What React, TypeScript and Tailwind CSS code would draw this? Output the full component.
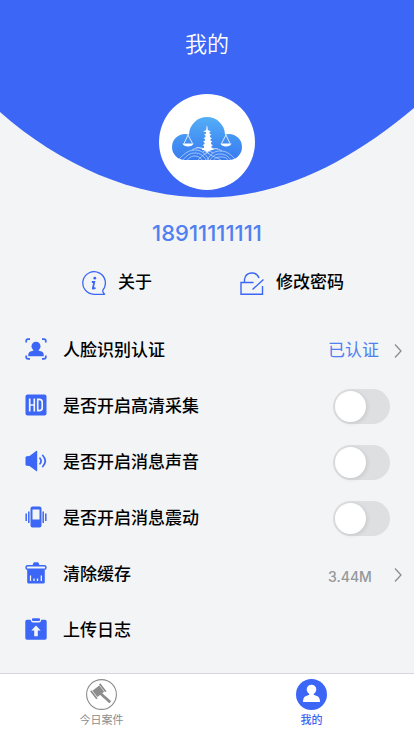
import { useState } from 'react';
import type { ReactNode } from 'react';

const BLUE = '#3c66f5';

function Logo() {
  return (
    <svg viewBox="0 0 96 96" className="size-24" aria-hidden="true">
      <defs>
        <linearGradient id="sky" x1="0" y1="23" x2="0" y2="66" gradientUnits="userSpaceOnUse">
          <stop offset="0" stopColor="#55aef6" />
          <stop offset="0.55" stopColor="#4391f3" />
          <stop offset="1" stopColor="#3a7bf0" />
        </linearGradient>
        <clipPath id="cloud">
          <circle cx="48" cy="41" r="18" />
          <circle cx="26" cy="53" r="13" />
          <circle cx="70" cy="53" r="13" />
          <rect x="26" y="46" width="44" height="20" />
        </clipPath>
      </defs>
      <g clipPath="url(#cloud)">
        <rect width="96" height="96" fill="url(#sky)" />
        <g fill="none" stroke="#fff" strokeWidth="0.6" opacity="0.85">
          <path d="M20 65c6-6 10-9 16-9s10 3 14 10M23 67c5-6 8-8 13-8s8 2 11 7M27 67c4-4 6-5 9-5s6 2 8 5M33 56c6-4 10-3 15 2s9 5 14 8M37 54c6-1 9 3 13 6M42 54c5 0 8 3 12 5" />
          <path d="M76 65c-6-6-9-8-15-8s-9 3-13 9M73 67c-4-5-7-7-12-7s-7 2-10 6M70 67c-3-4-5-4-9-4s-5 1-7 4M63 57c-6-4-10-3-15 1s-6 5-9 8M59 55c-5-1-9 2-12 5M54 54c-5 0-7 2-10 4" />
        </g>
      </g>
      <path
        fill="#fff"
        d="M47.700 32h.6l.5 4 3.200 1.500-1.500.6v1.400l2 1.200-1.500.8v1.500l2 1.200-1.500.8v1.500l2 1.200-1.500.8v1.500l2 1.200-1.500.8v2l2 .8v1.200h-2.500L48 58l-2.500-2H43v-1.200l2-.8v-2l-1.500-.8 2-1.200v-1.500l-1.500-.8 2-1.200V45l-1.500-.8 2-1.200v-1.500l-1.500-.8 2-1.200v-1.400L44 37.500l3.200-1.500Z"
      />
      <g stroke="#fff" strokeWidth="0.8" fill="none">
        <path d="m29 41-4 8.500M29 41l4.500 8.500M67 41l-4.500 8.500M67 41l4 8.500" />
      </g>
      <path fill="#fff" d="M23.500 49.500h11c-1 4-10 4-11 0ZM61.500 49.500h11c-1 4-10 4-11 0Z" />
    </svg>
  );
}

function Glyph({ children }: { children: ReactNode }) {
  return (
    <svg viewBox="0 0 22 22" className="mb-1 size-[22px] shrink-0" fill={BLUE} aria-hidden="true">
      {children}
    </svg>
  );
}

const faceIcon = (
  <Glyph>
    <path
      fill="none"
      stroke={BLUE}
      strokeWidth="1.700"
      d="M1.200 4.500V3q0-1.800 1.800-1.800h2M17 1.200h2q1.800 0 1.800 1.800v1.500M1.200 17.500V19q0 1.800 1.800 1.800h2M17 20.800h2q1.800 0 1.800-1.800v-1.500"
    />
    <circle cx="11" cy="8.200" r="4.500" />
    <path d="M8.500 11h5v1.500l3 1c1.700.6 2.300 2 2.300 4.800H3.200c0-2.800.6-4.200 2.300-4.800l3-1Z" />
  </Glyph>
);

const hdIcon = (
  <Glyph>
    <rect x="0.500" y="0.500" width="21" height="21" rx="2" />
    <path
      fill="none"
      stroke="#f2f4f6"
      strokeWidth="1.700"
      d="M4.700 4.500v13M9.300 4.500v13M4.700 11h4.600M12.700 5.300v11.400h1.600q2.900 0 2.900-2.900V8.200q0-2.900-2.900-2.900Z"
    />
  </Glyph>
);

const soundIcon = (
  <Glyph>
    <path d="M.5 7.500q0-1 1-1.200L4.500 6l7-5.200q.7-.4.700.6v19.200q0 1-.7.6L4.500 16l-3-.3q-1-.2-1-1.200Z" />
    <path
      fill="none"
      stroke={BLUE}
      strokeWidth="1.700"
      strokeLinecap="round"
      d="M15 8.200q2.200 2.800 0 5.600M17.800 5.500q5 5.500 0 11"
    />
  </Glyph>
);

const vibrateIcon = (
  <Glyph>
    <path
      fillRule="evenodd"
      d="M7.500.5h7q2 0 2 2v17q0 2-2 2h-7q-2 0-2-2v-17q0-2 2-2ZM7.500 3.500v10h7v-10Z"
    />
    <path stroke={BLUE} strokeWidth="1.500" d="M3.800 5.500v11.500M1.200 7.500v7.500M18.200 5.500v11.500M20.800 7.500v7.500" />
  </Glyph>
);

const trashIcon = (
  <Glyph>
    <path d="M7.500 3.200 8.500.8q.2-.5.8-.5h3.400q.6 0 .8.500l1 2.400Z" />
    <rect x="1.100" y="3.700" width="19.800" height="3.600" rx="1.600" fill="none" stroke={BLUE} strokeWidth="1.500" />
    <path d="M2.200 8h17.600v12q0 1.600-1.600 1.600H3.800q-1.600 0-1.600-1.600Z" />
    <path stroke="#f2f4f6" strokeWidth="1.300" d="M5.500 13.500v5.500M9 16.500V19M12.500 16.500V19M16.300 13.500v5.500" />
  </Glyph>
);

const uploadIcon = (
  <Glyph>
    <path d="M2 1.800h3.700Q6 4.500 8 4.500h6q2 0 2.300-2.700H20q1.700 0 1.700 1.700V20q0 1.700-1.700 1.700H2Q.3 21.700.3 20V3.500Q.3 1.800 2 1.800Z" />
    <rect x="7" y="0.300" width="8" height="2.800" rx="1" />
    <path fill="#f2f4f6" d="m11 7.500 4.700 5h-2.900v5.800H9.200v-5.800H6.300Z" />
  </Glyph>
);

function Chevron() {
  return (
    <svg viewBox="0 0 8 14" className="h-3.5 w-2 shrink-0" fill="none" stroke="#8b8e92" strokeWidth="1.300" aria-hidden="true">
      <path d="m1 .5 6 6.500-6 6.500" />
    </svg>
  );
}

function LinkRow({ icon, label, children }: { icon: ReactNode; label: string; children?: ReactNode }) {
  return (
    <li>
      <button type="button" className="flex h-14 w-full items-center pr-3 pl-[25px] text-left">
        {icon}
        <span className="ml-4 flex-1 text-[17px] font-medium">{label}</span>
        {children}
      </button>
    </li>
  );
}

function SwitchRow({ icon, label }: { icon: ReactNode; label: string }) {
  const [on, setOn] = useState(false);
  return (
    <li>
      <label className="flex h-14 items-center pr-6 pl-[25px]">
        {icon}
        <span className="ml-4 flex-1 text-[17px] font-medium">{label}</span>
        <input
          type="checkbox"
          role="switch"
          checked={on}
          onChange={(e) => setOn(e.target.checked)}
          className="flex h-[35px] w-[57px] cursor-pointer appearance-none items-center rounded-full bg-[#dedfe1] px-0.5 before:size-[31px] before:rounded-full before:bg-white before:shadow-[1px_1px_4px_rgba(0,0,0,0.12)] checked:justify-end checked:bg-[#3c66f5]"
        />
      </label>
    </li>
  );
}

export default function App() {
  return (
    <div className="flex min-h-screen flex-col bg-[#f2f4f6] font-[Inter,'Noto_Sans_CJK_SC',sans-serif] text-black">
      <header className="relative flex h-[198px] flex-col items-center pt-7">
        <svg
          viewBox="0 0 414 198"
          preserveAspectRatio="none"
          className="absolute inset-0 size-full"
          aria-hidden="true"
        >
          <path fill={BLUE} d="M0 0h414v108C350 162 280 197.500 207 197.500S60 165 0 112Z" />
        </svg>
        <h1 className="relative text-[22px] leading-8 font-[350] text-white">我的</h1>
        <div className="relative mt-[34px] rounded-full bg-white">
          <Logo />
        </div>
      </header>

      <main className="flex-1">
        <p className="mt-[19px] text-center text-[22px] leading-8 font-medium text-[#5080f0]">18911111111</p>

        <div className="mt-[21px] flex justify-between pr-[70px] pl-[82px] text-[17px] font-medium">
          <button type="button" className="flex items-center gap-3">
            <svg viewBox="0 0 24 24" className="size-6" fill="none" stroke={BLUE} strokeWidth="1.300" aria-hidden="true">
              <path strokeLinejoin="round" d="M12 23.300A11.300 11.300 0 1 1 20.800 19.200q-.4 1.700 1.700 4.100Z" />
              <circle cx="12.800" cy="7.200" r="1.400" fill={BLUE} stroke="none" />
              <path strokeWidth="1.800" d="M9.800 11h2.500l-1.500 6.300q-.1 1 2.700-.6" />
            </svg>
            关于
          </button>
          <button type="button" className="flex items-center gap-3">
            <svg viewBox="0 0 24 24" className="size-6" fill="none" stroke={BLUE} strokeWidth="1.400" aria-hidden="true">
              <path d="M13.500 11.500H1v11.800h21.500V15M4.500 11.500V8.500a7.500 7.500 0 0 1 14.500-1.500M12.500 18.500 23.500 8.500" />
            </svg>
            修改密码
          </button>
        </div>

        <ul className="mt-[27px]">
          <LinkRow icon={faceIcon} label="人脸识别认证">
            <span className="mr-4 w-[50px] text-[17px] whitespace-nowrap text-[#5080f0]">已认证</span>
            <Chevron />
          </LinkRow>
          <SwitchRow icon={hdIcon} label="是否开启高清采集" />
          <SwitchRow icon={soundIcon} label="是否开启消息声音" />
          <SwitchRow icon={vibrateIcon} label="是否开启消息震动" />
          <LinkRow icon={trashIcon} label="清除缓存">
            <span className="mt-1 mr-4 w-[50px] text-sm font-medium whitespace-nowrap text-[#959799]">3.44M</span>
            <Chevron />
          </LinkRow>
          <LinkRow icon={uploadIcon} label="上传日志" />
        </ul>
      </main>

      <nav className="sticky bottom-0 grid h-[63px] grid-cols-2 border-t border-[#d5d7da] bg-white text-[11px] leading-4">
        <a href="#cases" className="flex flex-col items-center gap-0.5 pt-[5px] pr-1 text-[#8c8c8c]">
          <svg viewBox="0 0 31 31" className="size-[31px]" aria-hidden="true">
            <circle cx="15.500" cy="15.500" r="14.900" fill="none" stroke="#8c8c8c" strokeWidth="1.100" />
            <g fill="#8c8c8c" transform="translate(12.300 12.300) rotate(-38)">
              <rect x="-4.300" y="-4" width="8.600" height="8" />
              <rect x="-6.500" y="-5" width="1.700" height="10" />
              <rect x="4.800" y="-5" width="1.700" height="10" />
            </g>
            <path stroke="#8c8c8c" strokeWidth="2.800" d="m14 14 10.300 9.300" />
          </svg>
          今日案件
        </a>
        <a href="#mine" aria-current="page" className="flex flex-col items-center gap-0.5 pt-[5px] pl-0.5 font-medium text-[#3c66f5]">
          <svg viewBox="0 0 31 31" className="size-[31px]" aria-hidden="true">
            <circle cx="15.500" cy="15.500" r="15.500" fill={BLUE} />
            <circle cx="15.500" cy="10.500" r="4.800" fill="#fff" />
            <path fill="#fff" d="M13.300 13.500h4.400v2.200l3.800 1.500q2.500 1 2.500 5.800H7q0-4.800 2.500-5.800l3.800-1.500Z" />
          </svg>
          我的
        </a>
      </nav>
    </div>
  );
}
